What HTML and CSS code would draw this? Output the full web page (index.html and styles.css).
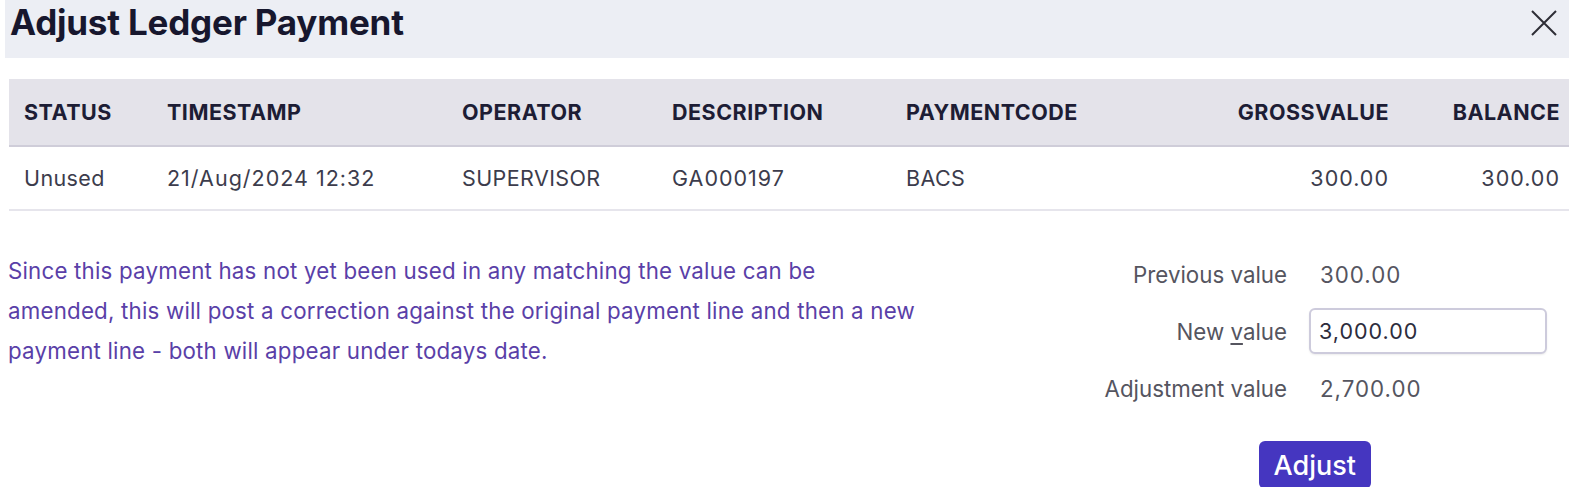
FILE: index.html
```html
<!DOCTYPE html>
<html lang="en">
<head>
    <meta charset="UTF-8">
    <title>Adjust Ledger Payment</title>
    <link rel="stylesheet" href="styles.css">
</head>
<body>
    <div class="dialog">
        <div class="title-bar">
            <h1>Adjust Ledger Payment</h1>
            <button class="close-btn" type="button" aria-label="Close">
                <svg width="28" height="28" viewBox="0 0 28 28">
                    <path d="M2 2 L26 26 M26 2 L2 26" stroke="#2e2e36" stroke-width="2" fill="none"/>
                </svg>
            </button>
        </div>

        <table class="ledger">
            <colgroup>
                <col style="width: 143px">
                <col style="width: 295px">
                <col style="width: 210px">
                <col style="width: 234px">
                <col style="width: 309px">
                <col style="width: 198px">
                <col style="width: 171px">
            </colgroup>
            <thead>
                <tr>
                    <th>Status</th>
                    <th>Timestamp</th>
                    <th>Operator</th>
                    <th>Description</th>
                    <th>PaymentCode</th>
                    <th class="num">GrossValue</th>
                    <th class="num">Balance</th>
                </tr>
            </thead>
            <tbody>
                <tr>
                    <td>Unused</td>
                    <td class="digits">21/Aug/2024 12:32</td>
                    <td>SUPERVISOR</td>
                    <td class="digits">GA000197</td>
                    <td>BACS</td>
                    <td class="num digits">300.00</td>
                    <td class="num digits">300.00</td>
                </tr>
            </tbody>
        </table>

        <div class="adjust-area">
            <p class="note">Since this payment has not yet been used in any matching the value can be amended, this will post a correction against the original payment line and then a new payment line - both will appear under todays date.</p>

            <form class="adjust-form">
                <div class="fields">
                    <span class="label">Previous value</span>
                    <span class="value digits">300.00</span>

                    <label class="label" for="newValue">New <u>v</u>alue</label>
                    <input type="text" id="newValue" class="digits" value="3,000.00">

                    <span class="label">Adjustment value</span>
                    <span class="value digits">2,700.00</span>
                </div>
                <button type="button" class="adjust-btn">Adjust</button>
            </form>
        </div>
    </div>
</body>
</html>
```

FILE: styles.css
```css
body {
    margin: 0;
    background-color: #fff;
    font-family: Inter, "DejaVu Sans", sans-serif;
    color: #3b3b4a;
    overflow: hidden;
}
.dialog {
    width: 1569px;
}
.title-bar {
    margin-left: 5px;
    height: 58px;
    background-color: #eceef4;
    display: flex;
    justify-content: space-between;
    align-items: flex-start;
}
.title-bar h1 {
    margin: 0;
    padding: 0 0 0 5px;
    font-size: 35px;
    font-weight: 700;
    line-height: 44px;
    color: #17172e;
    letter-spacing: -0.2px;
}
.close-btn {
    margin: 9px 11px 0 0;
    padding: 0;
    border: none;
    background: none;
    width: 28px;
    height: 28px;
    cursor: pointer;
}
.ledger {
    margin: 21px 0 0 9px;
    width: 1560px;
    table-layout: fixed;
    border-collapse: collapse;
}
.ledger th, .ledger td {
    padding: 0 9px 0 15px;
    text-align: left;
    white-space: nowrap;
}
.ledger th {
    height: 66px;
    background-color: #e4e3ea;
    border-bottom: 2px solid #cfcdd9;
    font-size: 21.5px;
    font-weight: 700;
    letter-spacing: 0.5px;
    text-transform: uppercase;
    color: #1d1d35;
}
.ledger td {
    height: 62px;
    border-bottom: 2px solid #e6e5ec;
    font-size: 21.5px;
    letter-spacing: 0.4px;
    color: #3c3c4c;
}
.ledger .num {
    text-align: right;
}
.ledger td.digits, .value.digits, input.digits {
    letter-spacing: 1px;
}
.adjust-area {
    display: flex;
    justify-content: space-between;
    margin-top: 40px;
}
.note {
    margin: 0 0 0 8px;
    width: 920px;
    font-size: 22.3px;
    letter-spacing: 0.2px;
    line-height: 40px;
    color: #5a3fa8;
}
.adjust-form {
    margin-right: 22px;
    display: flex;
    flex-direction: column;
    align-items: center;
    gap: 30px;
}
.fields {
    display: grid;
    grid-template-columns: auto 238px;
    grid-auto-rows: 46px;
    row-gap: 11px;
    column-gap: 22px;
    align-items: center;
    font-size: 22.3px;
    color: #55555f;
}
.label {
    text-align: right;
}
.label u {
    text-underline-offset: 3px;
}
.value {
    padding-left: 11px;
}
.fields input {
    box-sizing: border-box;
    height: 46px;
    width: 238px;
    padding: 0 8px;
    border: 2px solid #cdcbdc;
    border-radius: 6px;
    font-family: inherit;
    font-size: 21.5px;
    color: #2c2c3c;
    box-shadow: 0 1px 2px rgba(0, 0, 0, 0.08);
}
.adjust-btn {
    margin-left: -22px;
    width: 112px;
    height: 48px;
    border: none;
    border-radius: 6px;
    background-color: #4536c0;
    color: #fff;
    font-family: inherit;
    font-size: 27px;
    font-weight: 500;
    cursor: pointer;
}
```
